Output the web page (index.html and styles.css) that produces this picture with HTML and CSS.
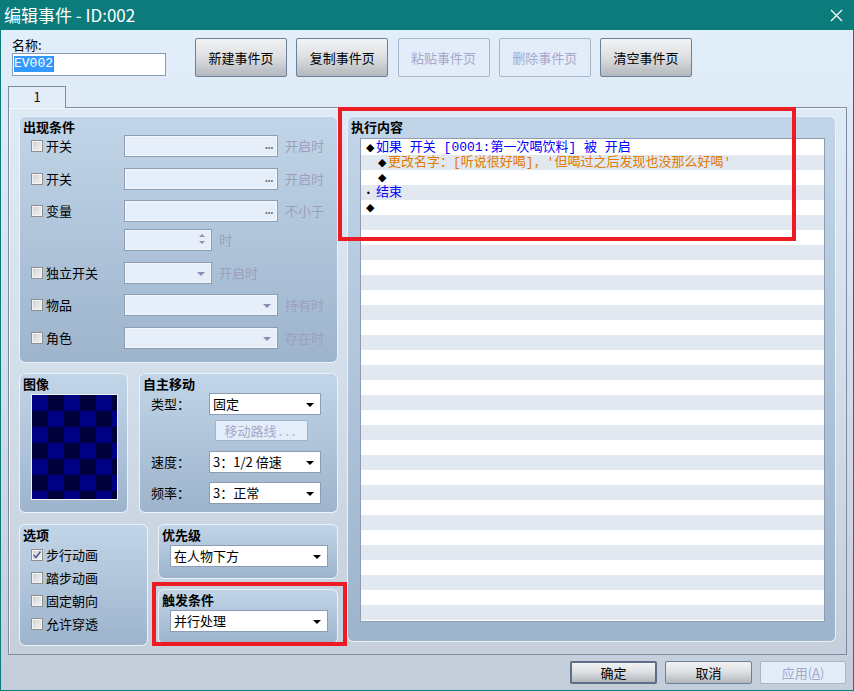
FILE: index.html
```html
<!DOCTYPE html>
<html lang="zh-CN">
<head>
    <meta charset="UTF-8">
    <title>编辑事件 - ID:002</title>
    <link rel="stylesheet" href="styles.css">
</head>
<body>
    <div class="window">
        <div class="titlebar">
            <span class="title">编辑事件 - ID:002</span>
            <svg class="close" width="13" height="13" viewBox="0 0 13 13">
                <path d="M1 1 L12 12 M12 1 L1 12" stroke="#fff" stroke-width="1.3"/>
            </svg>
        </div>

        <!-- 名称 + 事件页按钮 -->
        <div class="head">
            <div class="name-field">
                <div class="name-label">名称:</div>
                <div class="name-input"><span class="selected">EV002</span><span class="caret"></span></div>
            </div>
            <div class="page-buttons">
                <button class="btn">新建事件页</button>
                <button class="btn">复制事件页</button>
                <button class="btn" disabled>粘贴事件页</button>
                <button class="btn" disabled>删除事件页</button>
                <button class="btn">清空事件页</button>
            </div>
        </div>

        <div class="tabs">
            <div class="tab">1</div>
        </div>

        <div class="tab-panel">
            <div class="left-col">
                <!-- 出现条件 -->
                <section class="group cond">
                    <div class="group-title">出现条件</div>
                    <div class="cond-rows">
                        <div class="cond-row">
                            <label class="cond-check"><span class="checkbox"></span>开关</label>
                            <div class="field wide"><span class="dots">...</span></div>
                            <span class="suffix">开启时</span>
                        </div>
                        <div class="cond-row">
                            <label class="cond-check"><span class="checkbox"></span>开关</label>
                            <div class="field wide"><span class="dots">...</span></div>
                            <span class="suffix">开启时</span>
                        </div>
                        <div class="cond-row">
                            <label class="cond-check"><span class="checkbox"></span>变量</label>
                            <div class="field wide"><span class="dots">...</span></div>
                            <span class="suffix">不小于</span>
                        </div>
                        <div class="cond-row spin-row">
                            <span class="cond-check"></span>
                            <div class="field narrow"><span class="spin"><i class="up"></i><i class="down"></i></span></div>
                            <span class="suffix">时</span>
                        </div>
                        <div class="cond-row">
                            <label class="cond-check"><span class="checkbox"></span>独立开关</label>
                            <div class="field narrow"><span class="arrow dim"></span></div>
                            <span class="suffix">开启时</span>
                        </div>
                        <div class="cond-row">
                            <label class="cond-check"><span class="checkbox"></span>物品</label>
                            <div class="field wide"><span class="arrow dim"></span></div>
                            <span class="suffix">持有时</span>
                        </div>
                        <div class="cond-row">
                            <label class="cond-check"><span class="checkbox"></span>角色</label>
                            <div class="field wide"><span class="arrow dim"></span></div>
                            <span class="suffix">存在时</span>
                        </div>
                    </div>
                </section>

                <div class="mid-row">
                    <!-- 图像 -->
                    <section class="group image">
                        <div class="group-title">图像</div>
                        <div class="sprite"></div>
                    </section>

                    <!-- 自主移动 -->
                    <section class="group move">
                        <div class="group-title">自主移动</div>
                        <div class="move-row">
                            <span class="move-label">类型：</span>
                            <div class="select">固定<span class="arrow"></span></div>
                        </div>
                        <button class="route-btn" disabled>移动路线<span class="ellipsis">...</span></button>
                        <div class="move-row speed">
                            <span class="move-label">速度：</span>
                            <div class="select">3：1/2 倍速<span class="arrow"></span></div>
                        </div>
                        <div class="move-row freq">
                            <span class="move-label">频率：</span>
                            <div class="select">3：正常<span class="arrow"></span></div>
                        </div>
                    </section>
                </div>

                <div class="low-row">
                    <!-- 选项 -->
                    <section class="group options">
                        <div class="group-title">选项</div>
                        <label class="opt"><span class="checkbox checked"><svg width="10" height="10" viewBox="0 0 10 10"><path d="M1.5 5 L4 7.5 L8.5 1.5" fill="none" stroke="#4a5d94" stroke-width="1.6"/></svg></span>步行动画</label>
                        <label class="opt"><span class="checkbox"></span>踏步动画</label>
                        <label class="opt"><span class="checkbox"></span>固定朝向</label>
                        <label class="opt"><span class="checkbox"></span>允许穿透</label>
                    </section>

                    <div class="stack">
                        <section class="group small">
                            <div class="group-title">优先级</div>
                            <div class="select wide-select">在人物下方<span class="arrow"></span></div>
                        </section>
                        <section class="group small">
                            <div class="group-title">触发条件</div>
                            <div class="select wide-select">并行处理<span class="arrow"></span></div>
                        </section>
                    </div>
                </div>
            </div>

            <!-- 执行内容 -->
            <section class="group exec">
                <div class="group-title">执行内容</div>
                <div class="command-list">
                    <div class="cmd blue"><span class="dia">◆</span>如果 开关 [0001:第一次喝饮料] 被 开启</div>
                    <div class="cmd orange indent"><span class="dia">◆</span>更改名字：[听说很好喝]，'但喝过之后发现也没那么好喝'</div>
                    <div class="cmd indent"><span class="dia">◆</span></div>
                    <div class="cmd blue"><span class="bullet">•</span>结束</div>
                    <div class="cmd"><span class="dia">◆</span></div>
                </div>
            </section>
        </div>

        <div class="footer">
            <button class="btn default">确定</button>
            <button class="btn">取消</button>
            <button class="btn" disabled>应用(<u>A</u>)</button>
        </div>

        <!-- 标注框 -->
        <div class="mark mark-exec"></div>
        <div class="mark mark-trigger"></div>
    </div>
</body>
</html>
```

FILE: styles.css
```css
:root {
    --teal: #0b7b7b;
    --border-dark: #7d8ca2;
    --field-border: #8d9db3;
    --muted: #9d9fbe;
}

* {
    box-sizing: border-box;
}

body {
    margin: 0;
    font-family: "Noto Sans CJK SC", "Noto Sans", sans-serif;
    font-size: 13px;
    line-height: 16px;
    color: #000;
}

.window {
    position: relative;
    width: 854px;
    height: 691px;
    border: 1px solid var(--teal);
    border-top: 0;
    display: flex;
    flex-direction: column;
    background: linear-gradient(#e3effb, #dae6f2 30%, #c3ceda);
}

.titlebar {
    height: 30px;
    margin: 0 -1px;
    padding: 0 11px 0 4px;
    background: var(--teal);
    color: #fff;
    display: flex;
    align-items: center;
    justify-content: space-between;
}

.title {
    font-size: 17px;
    line-height: 20px;
}

/* 顶部：名称与事件页按钮 */
.head {
    height: 56px;
    padding: 7px 0 0 11px;
    display: flex;
    align-items: flex-start;
}

.name-field {
    width: 183px;
}

.name-label {
    height: 16px;
}

.name-input {
    width: 154px;
    height: 23px;
    background: #fff;
    border: 1px solid #8a9cb6;
    padding: 2px 0 0 1px;
    display: flex;
    align-items: flex-start;
}

.name-input .selected {
    background: #3399ff;
    color: #fff;
    font-family: "Liberation Mono", monospace;
    font-size: 13px;
    line-height: 16px;
}

.name-input .caret {
    width: 1px;
    height: 16px;
    background: #d06000;
}

.page-buttons {
    display: flex;
    gap: 9.25px;
    margin-top: 1px;
}

.page-buttons .btn {
    width: 92px;
    height: 39px;
}

.btn {
    font-family: inherit;
    font-size: 13px;
    color: #000;
    background: linear-gradient(#f1f2f3, #dfe1e4 45%, #b3b8be);
    border: 1px solid #6e7f99;
    border-radius: 2px;
    padding: 0;
}

.btn:disabled {
    background: #e2edf9;
    border-color: #a6b6cc;
    color: #a7a7c9;
}

/* 标签页 */
.tabs {
    height: 21px;
    padding-left: 7px;
    position: relative;
    z-index: 1;
}

.tab {
    width: 58px;
    height: 22px;
    border: 1px solid var(--border-dark);
    border-bottom: 0;
    background: #e2edf8;
    text-align: center;
    line-height: 20px;
    color: #300;
}

.tab-panel {
    height: 548px;
    margin: 0 6px 0 7px;
    border: 1px solid var(--border-dark);
    box-shadow: inset 1px 1px 0 rgba(255, 255, 255, 0.6);
    padding: 8px 10px;
    display: flex;
    gap: 9px;
}

.left-col {
    width: 319px;
    display: flex;
    flex-direction: column;
}

/* 分组框 */
.group {
    border: 1px solid rgba(240, 246, 252, 0.9);
    border-radius: 6px;
    background: linear-gradient(#c2d5e8, #9db4cc);
}

.group-title {
    font-weight: bold;
    padding: 2px 0 0 3px;
    height: 18px;
    line-height: 16px;
}

.checkbox {
    display: inline-flex;
    align-items: center;
    justify-content: center;
    width: 12px;
    height: 12px;
    border: 1px solid #8e8f90;
    background: linear-gradient(135deg, #cfd0d2, #f5f5f5);
    box-shadow: inset 0 0 0 1px #f4f4f4;
    flex: none;
}

/* 出现条件 */
.cond {
    height: 247px;
}

.cond-rows {
    display: flex;
    flex-direction: column;
    gap: 10.5px;
}

.cond-row {
    height: 22px;
    display: flex;
    align-items: center;
}

.spin-row {
    margin-top: -3.5px;
}

.cond-check {
    width: 104px;
    padding-left: 11px;
    display: flex;
    align-items: center;
    gap: 3px;
}

.field {
    height: 22px;
    background: #e5eef9;
    border: 1px solid var(--field-border);
    box-shadow: inset 0 0 0 1px #f2f7fc;
    position: relative;
}

.field.wide {
    width: 154px;
}

.field.narrow {
    width: 88px;
}

.suffix {
    margin-left: 7px;
    color: var(--muted);
}

.dots {
    position: absolute;
    right: 4px;
    top: 1px;
    font-size: 10px;
    font-weight: bold;
    letter-spacing: -0.5px;
    color: #6c7280;
}

.spin {
    position: absolute;
    right: 6px;
    top: 4px;
    display: flex;
    flex-direction: column;
    gap: 4px;
}

.spin i {
    display: block;
    width: 0;
    height: 0;
    border-left: 3px solid transparent;
    border-right: 3px solid transparent;
}

.spin .up {
    border-bottom: 3px solid #8a8ea8;
}

.spin .down {
    border-top: 3px solid #8a8ea8;
}

.arrow {
    position: absolute;
    right: 6px;
    top: 9px;
    width: 0;
    height: 0;
    border-left: 4px solid transparent;
    border-right: 4px solid transparent;
    border-top: 4px solid #000;
}

.arrow.dim {
    border-top-color: #8b8bb5;
}

.select {
    position: relative;
    height: 22px;
    background: #fff;
    border: 1px solid var(--field-border);
    padding-left: 3px;
    line-height: 20px;
}

/* 图像 / 自主移动 */
.mid-row {
    height: 140px;
    margin-top: 10px;
    display: flex;
    gap: 11px;
}

.image {
    width: 109px;
}

.sprite {
    width: 87px;
    height: 106px;
    margin: 2px 0 0 11px;
    border: 1px solid #eef2f7;
    background: repeating-conic-gradient(#00003a 0 25%, #000085 0 50%) 0 0 / 32px 32px;
}

.move {
    width: 199px;
}

.move-row {
    display: flex;
    align-items: center;
    padding-left: 11px;
    margin-top: 1px;
}

.move-label {
    width: 58px;
}

.move-row .select {
    width: 112px;
}

.move-row.speed {
    margin-top: 10px;
}

.move-row.freq {
    margin-top: 9px;
}

.route-btn {
    display: block;
    width: 93px;
    height: 21px;
    margin: 5px 0 0 75px;
    padding: 0;
    font-family: inherit;
    font-size: 13px;
    background: #e3eefa;
    border: 1px solid #a3b4ca;
    color: #a8a8c8;
}

.route-btn .ellipsis {
    letter-spacing: 3px;
    margin-left: 2px;
}

/* 选项 / 优先级 / 触发条件 */
.low-row {
    height: 122px;
    margin-top: 11px;
    display: flex;
    gap: 10px;
}

.options {
    width: 129px;
}

.opt {
    height: 23px;
    padding-left: 11px;
    display: flex;
    align-items: center;
    gap: 3px;
}

.stack {
    width: 180px;
    display: flex;
    flex-direction: column;
    gap: 10px;
}

.small {
    height: 55px;
}

.wide-select {
    width: 158px;
    margin: 2px 0 0 11px;
}

/* 执行内容 */
.exec {
    width: 489px;
    height: 526px;
    display: flex;
    flex-direction: column;
}

.command-list {
    flex: 1;
    margin: 3px 10px 19px 12px;
    border: 1px solid #8d9cb0;
    padding: 1px 0 0 5px;
    background: repeating-linear-gradient(#fff 0 15px, #e2e8f0 15px 30px) 0 1px;
    background-color: #fff;
    font-family: "Liberation Mono", "Noto Sans CJK SC", monospace;
}

.cmd {
    height: 15px;
    line-height: 15px;
    white-space: nowrap;
    overflow: hidden;
}

.cmd.indent {
    padding-left: 12px;
}

.cmd.blue {
    color: #0000ff;
}

.cmd.orange {
    color: #e27a00;
}

.dia {
    display: inline-block;
    width: 10px;
    color: #000;
    font-family: "DejaVu Sans", sans-serif;
    font-size: 11px;
}

.bullet {
    display: inline-block;
    width: 10px;
    color: #000;
    font-family: "DejaVu Sans", sans-serif;
    font-size: 8px;
}

/* 底部按钮 */
.footer {
    flex: 1;
    display: flex;
    justify-content: flex-end;
    gap: 8px;
    padding: 6px 7px 0 0;
}

.footer .btn {
    width: 87px;
    height: 23px;
}

.footer .btn:last-child {
    width: 86px;
}

.footer .btn.default {
    border: 2px solid #5c6d88;
}

/* 红色标注框 */
.mark {
    position: absolute;
    border: 4px solid #ed1c24;
}

.mark-exec {
    left: 337px;
    top: 107px;
    width: 458px;
    height: 134px;
}

.mark-trigger {
    left: 151px;
    top: 582px;
    width: 195px;
    height: 64px;
}
```
